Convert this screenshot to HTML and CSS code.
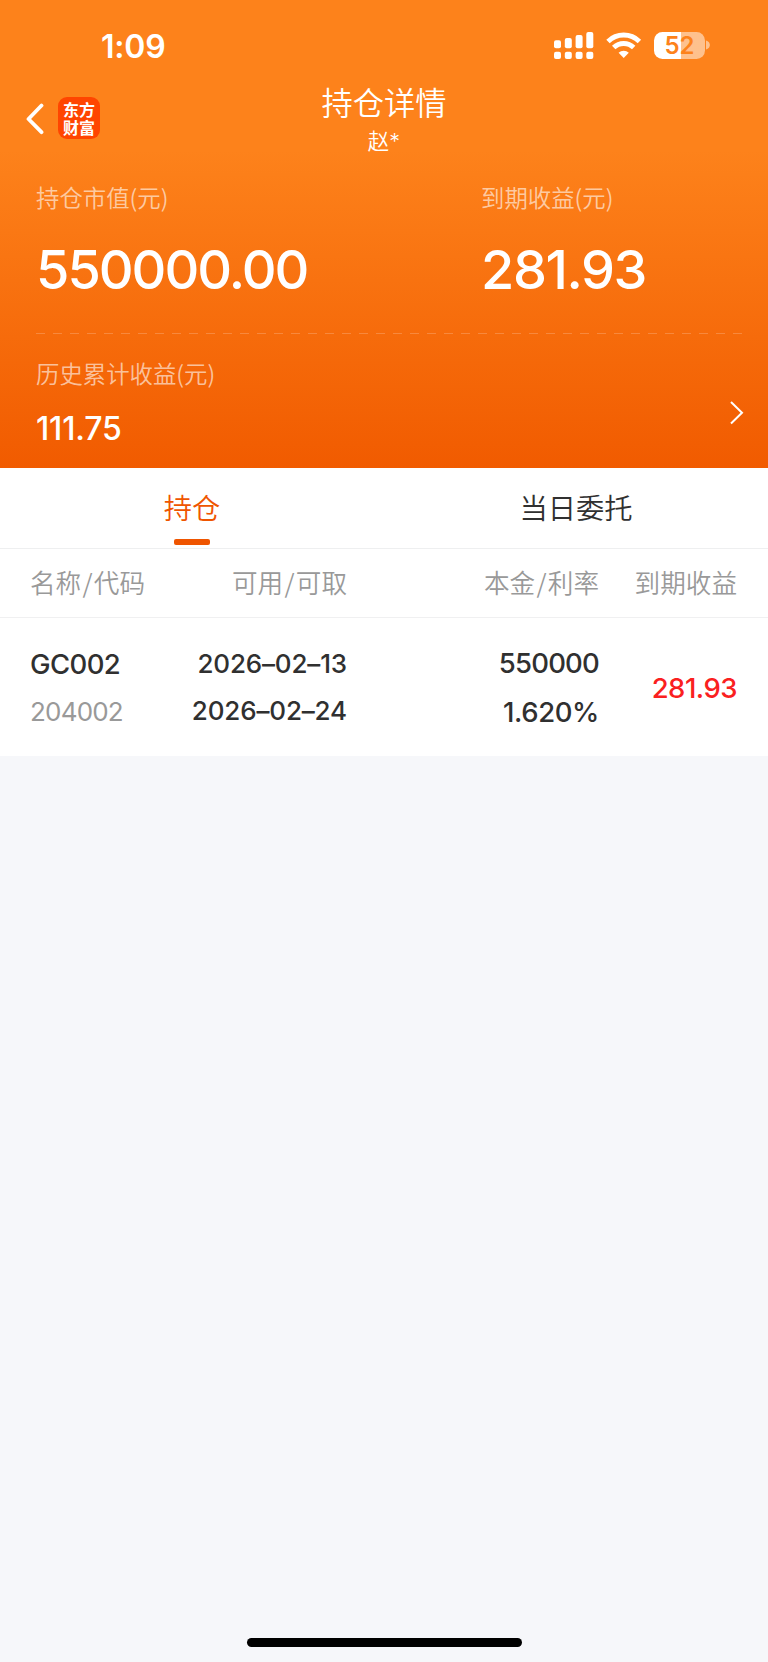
FILE: index.html
```html
<!DOCTYPE html>
<html lang="zh-CN">
	<head>
		<meta charset="utf-8">
		<title>持仓详情</title>
		<link rel="stylesheet" href="styles.css">
	</head>
	<body>
		<section id="summary">
			<div class="statusBar">
				<span class="clock">1:09</span>
				<svg class="signal" width="40" height="28" viewBox="0 0 40 28" fill="#fff">
					<rect x="0" y="8.3" width="7" height="8" rx="2"/>
					<rect x="10.8" y="6" width="7" height="10.3" rx="2"/>
					<rect x="21.6" y="3" width="7" height="13.3" rx="2"/>
					<rect x="32.3" y="0" width="7" height="16.3" rx="2"/>
					<rect x="0" y="19.7" width="7" height="7.3" rx="2"/>
					<rect x="10.8" y="19.7" width="7" height="7.3" rx="2"/>
					<rect x="21.6" y="19.7" width="7" height="7.3" rx="2"/>
					<rect x="32.3" y="19.7" width="7" height="7.3" rx="2"/>
				</svg>
				<svg class="wifi" width="36" height="28" viewBox="0 0 36 28">
					<g fill="none" stroke="#fff" stroke-width="4.9">
						<path d="M2 9.4a22.6 22.6 0 0 1 31.4 0"/>
						<path d="M7.7 15.6a14.4 14.4 0 0 1 20 0"/>
					</g>
					<path fill="#fff" d="M17.7 26l-5.1-5.2a7.4 7.4 0 0 1 10.2 0z"/>
				</svg>
				<div class="battery"><span>52</span></div>
				<svg class="batteryTip" width="5" height="10" viewBox="0 0 5 10"><path d="M0 0.5c5.2 1.6 5.2 7.4 0 9z" fill="#fff" opacity=".5"/></svg>
			</div>
			<header>
				<a href="#" class="back">
					<svg width="18" height="32" viewBox="0 0 18 32"><path d="M15.5 2.5L2.5 16l13 13.2" fill="none" stroke="#fff" stroke-width="3.8" stroke-linecap="round" stroke-linejoin="round"/></svg>
				</a>
				<div class="appLogo">东方<br>财富</div>
				<div class="pageTitle">
					<h1>持仓详情</h1>
					<p>赵*</p>
				</div>
			</header>
			<div class="totals">
				<div class="total">
					<div class="label">持仓市值(元)</div>
					<div class="amount">550000.00</div>
				</div>
				<div class="total">
					<div class="label">到期收益(元)</div>
					<div class="amount expected">281.93</div>
				</div>
			</div>
			<div class="divider"></div>
			<div class="history">
				<div>
					<div class="label">历史累计收益(元)</div>
					<div class="historyAmount">111.75</div>
				</div>
				<svg width="14" height="24" viewBox="0 0 14 24"><path d="M1 1l11 10.7L1 22.5" fill="none" stroke="#fff" stroke-width="2"/></svg>
			</div>
		</section>
		<nav>
			<a href="#" class="active">持仓</a>
			<a href="#">当日委托</a>
		</nav>
		<section id="holdings">
			<div class="row head">
				<div>名称<i>/</i>代码</div>
				<div>可用<i>/</i>可取</div>
				<div>本金<i>/</i>利率</div>
				<div>到期收益</div>
			</div>
			<div class="row item">
				<div>
					<p class="name">GC002</p>
					<p class="code">204002</p>
				</div>
				<div>
					<p class="date">2026–02–13</p>
					<p class="date">2026–02–24</p>
				</div>
				<div>
					<p class="principal">550000</p>
					<p class="rate">1.620%</p>
				</div>
				<div class="profit">281.93</div>
			</div>
		</section>
		<footer><div class="homeBar"></div></footer>
	</body>
</html>
```
FILE: styles.css
```css
* {
	box-sizing: border-box;
}

html, body {
	height: 100%;
}

body, h1, p {
	margin: 0;
}

body {
	font-family: Inter, "Noto Sans CJK SC", sans-serif;
	font-weight: 350;
	color: #303030;
	background-color: #f6f7fa;
	display: flex;
	flex-direction: column;
}

a {
	color: inherit;
	text-decoration: none;
}

svg {
	display: block;
}

#summary {
	flex: none;
	height: 468px;
	color: #fff;
	background: linear-gradient(#fd821b 0, #fd821b 150px, #f15b00 468px);
}

.statusBar {
	display: flex;
	align-items: flex-start;
	height: 84px;
	padding: 32px 57px 0 101px;
}

.clock {
	flex: 1;
	padding-top: 1px;
	font-size: 32px;
	line-height: 28px;
	font-weight: 600;
	letter-spacing: -0.2px;
}

.wifi {
	margin-left: 12px;
}

.battery {
	width: 51px;
	height: 27px;
	margin-left: 12px;
	border-radius: 8.5px;
	background: linear-gradient(90deg, #fff 26.5px, rgba(255,255,255,0.5) 26.5px);
	color: #fd821b;
	font-size: 24px;
	line-height: 27px;
	font-weight: 600;
	text-align: center;
}

.batteryTip {
	margin: 8px 0 0 1px;
}

header {
	display: flex;
	height: 90px;
	padding-left: 26px;
}

.back {
	margin-top: 19px;
}

.appLogo {
	width: 42px;
	height: 42px;
	margin: 13px 0 0 14px;
	padding-top: 3px;
	border-radius: 9px;
	background-color: #ff4500;
	font-family: "Noto Sans CJK SC", sans-serif;
	font-size: 16px;
	line-height: 18px;
	font-weight: 700;
	text-align: center;
}

.pageTitle {
	flex: 1;
	padding: 1px 100px 0 0;
	text-align: center;
}

.pageTitle h1 {
	font-size: 31.3px;
	line-height: 38px;
	font-weight: 350;
}

.pageTitle p {
	font-size: 21.5px;
	line-height: 36px;
}

.totals {
	display: grid;
	grid-template-columns: 445px auto;
	height: 159px;
	padding: 7px 0 0 36px;
}

.label {
	font-family: "Noto Sans CJK SC", sans-serif;
	font-size: 23.4px;
	line-height: 32px;
	color: rgba(255,255,255,0.62);
}

.amount {
	margin-top: 42px;
	font-size: 54px;
	line-height: 30px;
	font-weight: 500;
	letter-spacing: -2px;
}

.expected {
	letter-spacing: -1.4px;
}

.divider {
	height: 1px;
	margin: 0 26px 0 36px;
	background: repeating-linear-gradient(90deg, rgba(255,255,255,0.2) 0 9px, transparent 9px 17px);
}

.history {
	display: flex;
	justify-content: space-between;
	padding: 23px 24px 0 36px;
}

.history svg {
	margin-top: 44px;
}

.historyAmount {
	margin-top: 24px;
	font-size: 32px;
	line-height: 32px;
	font-weight: 500;
	letter-spacing: -0.2px;
}

nav {
	flex: none;
	display: grid;
	grid-template-columns: 1fr 1fr;
	height: 81px;
	background-color: #fff;
	border-bottom: 1px solid #eeeff0;
}

nav a {
	display: flex;
	flex-direction: column;
	align-items: center;
	padding-top: 21px;
	font-size: 28.3px;
	line-height: 40px;
}

nav .active {
	color: #ef5500;
}

nav .active::after {
	content: "";
	width: 36px;
	height: 6px;
	margin-top: 10px;
	border-radius: 2px;
	background-color: #ef5500;
}

#holdings {
	flex: none;
	background-color: #fff;
}

.row {
	display: grid;
	grid-template-columns: 151px 166px 252px 138px;
	padding-left: 30px;
	text-align: right;
}

.row > div:first-child {
	text-align: left;
}

.head {
	height: 69px;
	border-bottom: 1px solid #f0f0f1;
	font-family: "Noto Sans CJK SC", sans-serif;
	font-size: 25.6px;
	line-height: 65px;
	color: #999;
}

.head i {
	padding: 0 1.3px;
	font-style: normal;
}

.item {
	height: 138px;
	padding-top: 30px;
	font-weight: 500;
	line-height: 32px;
}

.item p + p {
	margin-top: 16px;
}

.name, .principal, .rate, .profit {
	font-size: 27.5px;
	letter-spacing: -0.8px;
}

.name {
	letter-spacing: -0.6px;
}

.principal {
	margin-top: -1px;
}

.code {
	font-size: 26px;
	font-weight: 400;
	letter-spacing: -0.8px;
	color: #999;
}

.date {
	font-size: 26px;
	letter-spacing: -0.15px;
}

.item .date + .date {
	margin-top: 15px;
}

.item .rate {
	margin-top: 17px;
	letter-spacing: -0.4px;
}

.profit {
	padding-top: 24px;
	letter-spacing: -0.5px;
	color: #fa2020;
}

footer {
	flex: 1;
	display: flex;
	align-items: flex-end;
	justify-content: center;
	padding-bottom: 15px;
}

.homeBar {
	width: 275px;
	height: 9px;
	border-radius: 5px;
	background-color: #000;
}
```
